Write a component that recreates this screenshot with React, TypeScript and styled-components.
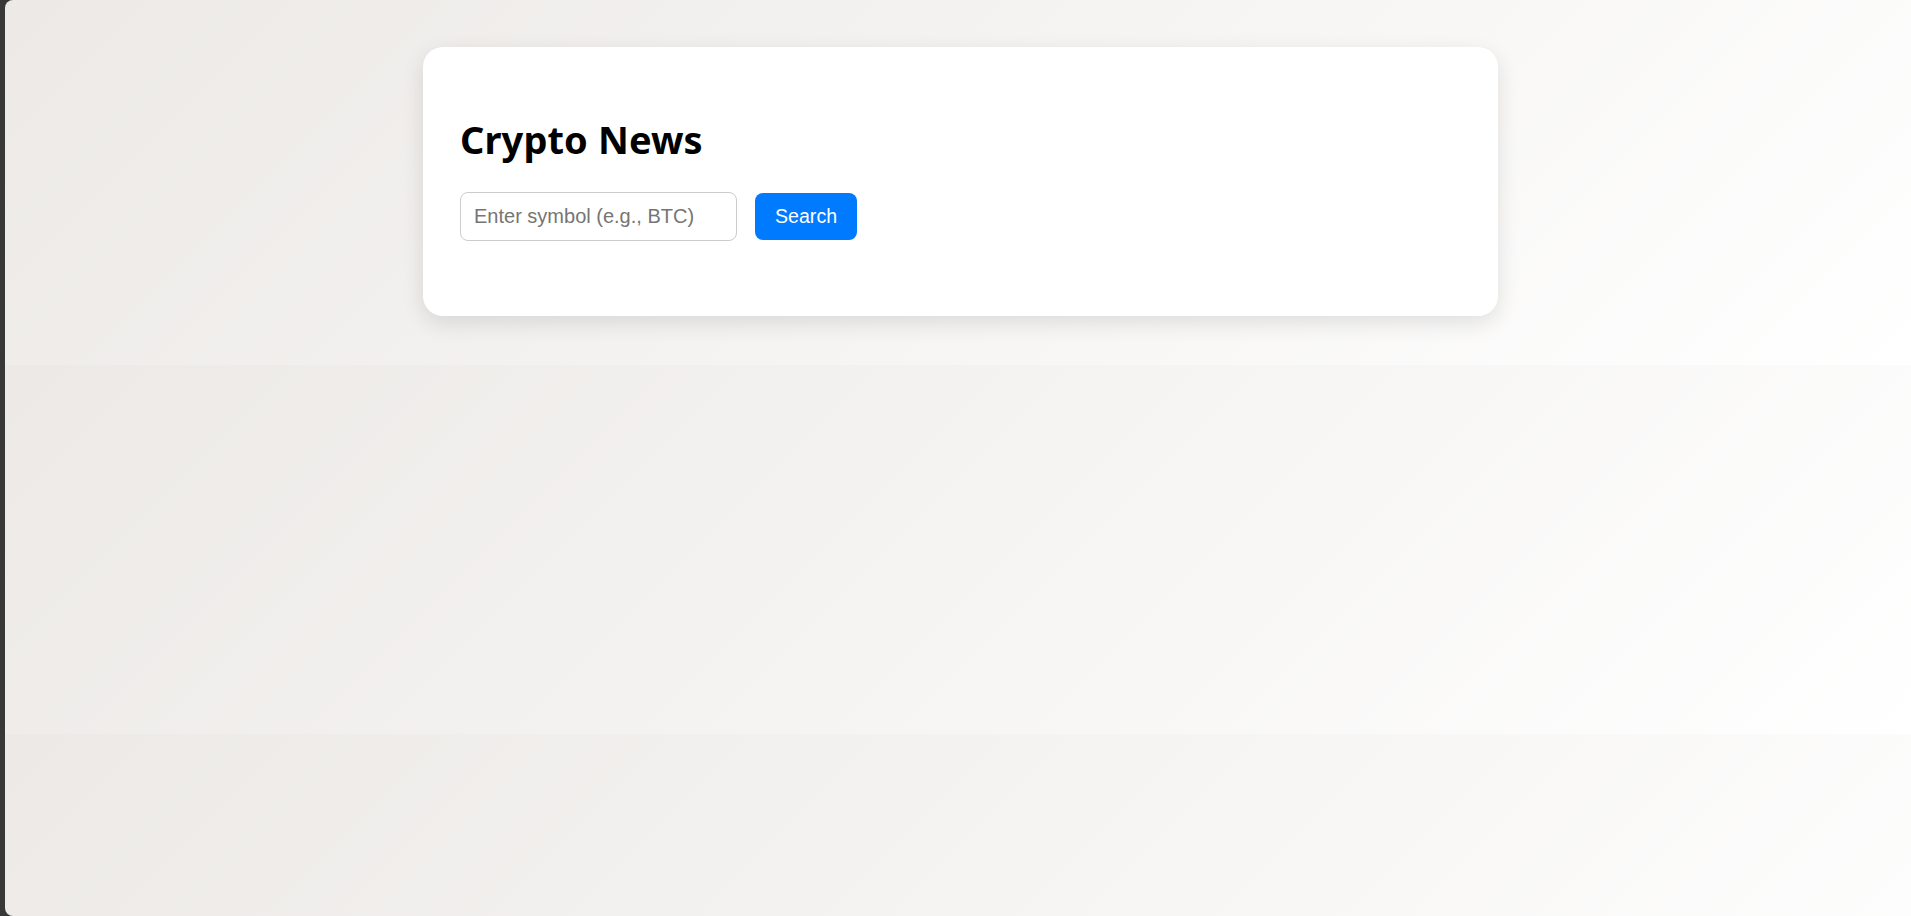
import React, { useState } from "react";
import styled, { createGlobalStyle } from "styled-components";

const GlobalStyle = createGlobalStyle`
  html,
  body,
  #root {
    margin: 0;
    padding: 0;
    height: 100%;
  }

  body {
    background: #383838;
    overflow: hidden;
  }
`;

const Frame = styled.div`
  display: flex;
  height: 100vh;
  padding-left: 5px;
  box-sizing: border-box;
  background: #383838;
`;

const Viewport = styled.main`
  flex: 1;
  display: flex;
  flex-direction: column;
  align-items: center;
  padding: 47px 0 0 5px;
  border-radius: 8px 0 0 8px;
  background: linear-gradient(135deg, #ece9e6, #ffffff);
  background-size: 100% 369px;
  background-position: 0 -4px;
  background-repeat: repeat-y;
  overflow: hidden;
`;

const Card = styled.section`
  width: 1075px;
  box-sizing: border-box;
  padding: 37px;
  background: #ffffff;
  border-radius: 20px;
  box-shadow: 0 7px 22px rgba(0, 0, 0, 0.11);
`;

const Title = styled.h1`
  margin: 33px 0 29px;
  font-family: "Noto Sans", "Open Sans", sans-serif;
  font-size: 38px;
  font-weight: 700;
  line-height: 1.2;
  letter-spacing: 0.1px;
  color: #000000;
`;

const SearchRow = styled.form`
  display: flex;
  align-items: center;
  gap: 18px;
  margin-bottom: 38px;
`;

const SymbolInput = styled.input`
  width: 277px;
  height: 49px;
  box-sizing: border-box;
  padding: 12px 13px;
  border: 1px solid #cccccc;
  border-radius: 8px;
  font-family: "Liberation Sans", Arial, sans-serif;
  font-size: 20px;
  color: #222222;
  outline: none;

  &::placeholder {
    color: #757575;
  }
`;

const SearchButton = styled.button`
  height: 47px;
  padding: 0 20px;
  border: none;
  border-radius: 8px;
  background: #007bff;
  color: #ffffff;
  font-family: "Liberation Sans", Arial, sans-serif;
  font-size: 19.6px;
  cursor: pointer;
`;

const App = () => {
  const [symbol, setSymbol] = useState("");

  return (
    <>
      <GlobalStyle />
      <Frame>
        <Viewport>
          <Card>
            <Title>Crypto News</Title>
            <SearchRow onSubmit={(e) => e.preventDefault()}>
              <SymbolInput
                value={symbol}
                onChange={(e) => setSymbol(e.target.value)}
                placeholder="Enter symbol (e.g., BTC)"
              />
              <SearchButton type="submit">Search</SearchButton>
            </SearchRow>
          </Card>
        </Viewport>
      </Frame>
    </>
  );
};

export default App;
